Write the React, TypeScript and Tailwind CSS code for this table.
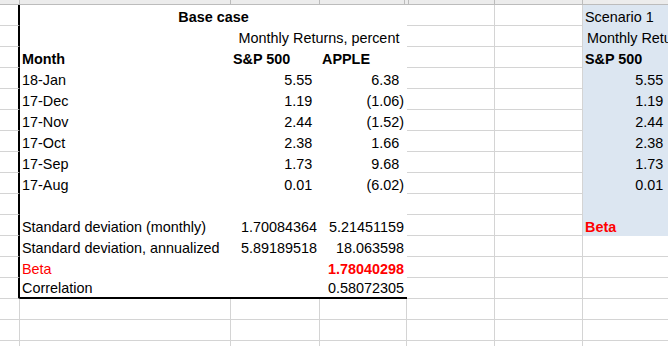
import React from 'react'

// column widths include each cell's right border
const W = {
  A: 'w-[20px]',
  B: 'w-[211px]',
  C: 'w-[89px]',
  D: 'w-[87px]',
  E: 'w-[88px]',
  F: 'w-[88px]',
  G: 'w-[88px]',
}

const grid = 'border-r border-b border-[#d4d4d4]'

function Cell({ w, className = '', children }: { w: string; className?: string; children?: React.ReactNode }) {
  return (
    <div className={`${w} h-[21px] shrink-0 flex items-end pb-px leading-[16px] whitespace-nowrap ${className}`}>
      {children}
    </div>
  )
}

// accounting style: positives keep a blank slot for the closing paren
function Acct({ v }: { v: string }) {
  if (v.startsWith('(')) return <>{v}</>
  return (
    <>
      {v}
      <span className="invisible">)</span>
    </>
  )
}

type Row = {
  b?: React.ReactNode
  c?: React.ReactNode
  d?: React.ReactNode
  g?: React.ReactNode
  span?: 'bd' | 'cd'
  last?: boolean
}

const months: [string, string, string][] = [
  ['18-Jan', '5.55', '6.38'],
  ['17-Dec', '1.19', '(1.06)'],
  ['17-Nov', '2.44', '(1.52)'],
  ['17-Oct', '2.38', '1.66'],
  ['17-Sep', '1.73', '9.68'],
  ['17-Aug', '0.01', '(6.02)'],
]

const rows: Row[] = [
  { span: 'bd', b: <span className="font-bold">Base case</span>, g: 'Scenario 1' },
  { span: 'cd', c: 'Monthly Returns, percent', g: <span className="pl-[2px]">Monthly Returns, percent</span> },
  {
    b: <span className="font-bold">Month</span>,
    c: <span className="font-bold">S&amp;P 500</span>,
    d: <span className="font-bold">APPLE</span>,
    g: <span className="font-bold">S&amp;P 500</span>,
  },
  ...months.map(([m, sp, ap]) => ({ b: m, c: <Acct v={sp} />, d: <Acct v={ap} />, g: <Acct v={sp} /> })),
  {},
  {
    b: 'Standard deviation (monthly)',
    c: '1.70084364',
    d: '5.21451159',
    g: <span className="font-bold text-[#ff0000]">Beta</span>,
  },
  { b: 'Standard deviation, annualized', c: '5.89189518', d: '18.063598' },
  { b: <span className="text-[#ff0000]">Beta</span>, d: <span className="font-bold text-[#ff0000]">1.78040298</span> },
  { b: 'Correlation', d: '0.58072305', last: true },
]

function TableRow({ r, i }: { r: Row; i: number }) {
  const edge = r.last ? 'border-b-2 border-black' : ''
  const blue = i <= 10
  return (
    <div className="flex">
      <Cell w={W.A} className="border-b border-[#d4d4d4] border-r-2 border-r-black" />
      {r.span === 'bd' ? (
        <Cell w="w-[387px]" className={`justify-center bg-white ${edge}`}>
          {r.b}
        </Cell>
      ) : (
        <>
          <Cell w={W.B} className={`pl-[2px] bg-white ${edge}`}>
            {r.b}
          </Cell>
          {r.span === 'cd' ? (
            <Cell w="w-[176px]" className={`justify-center bg-white ${edge}`}>
              {r.c}
            </Cell>
          ) : (
            <>
              <Cell
                w={W.C}
                className={`bg-white ${edge} ${i === 2 ? 'pl-[2px]' : 'justify-end pr-[3px]'}`}
              >
                {r.c}
              </Cell>
              <Cell
                w={W.D}
                className={`bg-white ${edge} ${i === 2 ? 'pl-[2px]' : 'justify-end pr-[3px]'}`}
              >
                {r.d}
              </Cell>
            </>
          )}
        </>
      )}
      <Cell w={W.E} className={grid} />
      <Cell w={W.F} className={grid} />
      {blue ? (
        <Cell
          w={W.G}
          className={`bg-[#dce6f1] ${
            i <= 2 || i === 10 ? 'pl-[2px]' : 'justify-end pr-[3px]'
          }`}
        >
          {r.g}
        </Cell>
      ) : (
        <Cell w={W.G} className={grid} />
      )}
    </div>
  )
}

function EmptyRow() {
  return (
    <div className="flex">
      <Cell w={W.A} className={grid} />
      <Cell w={W.B} className={grid} />
      <Cell w={W.C} className={grid} />
      <Cell w={W.D} className={grid} />
      <Cell w={W.E} className={grid} />
      <Cell w={W.F} className={grid} />
      <Cell w={W.G} className={grid} />
    </div>
  )
}

export default function App() {
  const head = 'h-[5px] shrink-0 bg-[#ececec] border-r border-b border-[#bcbcbc]'
  return (
    <div
      className="w-[668px] h-[346px] overflow-hidden bg-white text-black text-[14.4px]"
      style={{ fontFamily: '"Liberation Sans", Arial, sans-serif' }}
    >
      {/* clipped column header strip */}
      <div className="flex">
        <div className={`${head} w-[20px]`} />
        <div className={`${head} w-[211px]`} />
        <div className={`${head} w-[89px]`} />
        <div className={`${head} w-[85px]`} />
        <div className={`${head} w-[4px]`} />
        <div className={`${head} w-[86px]`} />
        <div className={`${head} w-[88px]`} />
        <div className={`${head} w-[88px]`} />
      </div>
      {rows.map((r, i) => (
        <TableRow key={i} r={r} i={i} />
      ))}
      <EmptyRow />
      <EmptyRow />
      <EmptyRow />
    </div>
  )
}
